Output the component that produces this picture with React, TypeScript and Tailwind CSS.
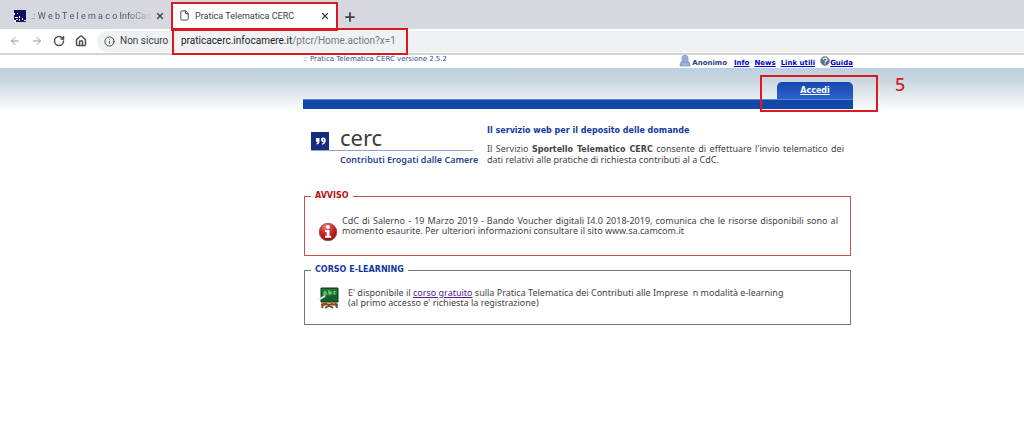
import type { ReactNode } from 'react';
import { ArrowLeft, ArrowRight, File, House, Info, Plus, RotateCw, X } from 'lucide-react';

interface NoticeProps {
    title: string;
    tone: 'alert' | 'course';
    icon: ReactNode;
    children: ReactNode;
}

const links = ['Info', 'News', 'Link utili'];

function TabIcon() {
    return (
        <svg viewBox="0 0 12 12" className="size-3 shrink-0">
            <rect width="12" height="12" fill="#10106a" />
            <path d="M1 1h2v2H1zM4 2h2v1H4zM2 5h3v1H2zM7 1h1v4H7z" fill="#080820" />
            <path d="M0 3h1v2H0zM3 3h1v1H3zM1 7h3v1H1zM5 6h1v2H5zM8 8h1v2H8zM10 10h2v1h-2zM0 10h2v2H0z" fill="#fff" />
            <path d="M2 9h2v1H2zM5 9h1v2H5z" fill="#e8dc60" />
        </svg>
    );
}

function UserIcon() {
    return (
        <svg viewBox="0 0 12 12" className="-mt-1 mr-px size-3">
            <path d="M1 11c0-3 1-5 3-5h4c2 0 3 2 3 5z" fill="#86a9cf" stroke="#7b9cc4" strokeWidth=".7" />
            <path d="M3 3c0-4 6-4 6 0v2c0 3-6 3-6 0z" fill="#93b0d0" stroke="#7c99bc" strokeWidth=".7" />
            <path d="M3 9h6" stroke="#b4cbe4" />
        </svg>
    );
}

function HelpIcon() {
    return (
        <svg viewBox="0 0 10 10" className="-mt-1 size-[10px]">
            <circle cx="5" cy="5" r="4.5" fill="#58708a" stroke="#8d9dac" strokeWidth=".8" />
            <path d="M3.2 3.8C3.2 1.6 7 1.7 7 3.7 7 5 5 5 5 6.3M5 7.2v1" fill="none" stroke="#fff" strokeWidth="1.2" />
        </svg>
    );
}

function InfoBall() {
    return (
        <svg viewBox="0 0 20 20" className="size-5">
            <defs>
                <radialGradient id="ball" cx=".4" cy=".2" r=".8">
                    <stop offset="0" stopColor="#ef8580" />
                    <stop offset=".45" stopColor="#ce3030" />
                    <stop offset="1" stopColor="#8e1010" />
                </radialGradient>
            </defs>
            <circle cx="10" cy="10" r="8.8" fill="url(#ball)" stroke="#9b4a4a" strokeWidth=".8" />
            <circle cx="10" cy="5" r="1.9" fill="#fff" />
            <path d="M7 8h4.500v5.800h1.700v2H7v-2h1.600V10H7z" fill="#fff" />
        </svg>
    );
}

function Blackboard() {
    return (
        <svg viewBox="0 0 22 22" className="size-[22px]">
            <path d="M6 15l-2 6M17 15l2 6M3 17.500h17M7 21l8-5M15 21l-8-5" stroke="#7d4c24" strokeWidth="2" />
            <path d="M3 1h17v14H3z" fill="#14602a" stroke="#0b3d1b" />
            <path d="M4 2h15v5L4 11z" fill="#1d7a35" />
            <path d="M6 5h2v3H6zM11 3v4h2V5h-2M17.500 4.500H16v2.500h1.500" fill="none" stroke="#a8d9a8" strokeWidth=".9" />
            <path d="M0 13l7-4" stroke="#e6eee2" strokeWidth="1.800" />
            <path d="M3 15.500h17" stroke="#b5793b" />
        </svg>
    );
}

function CercLogo() {
    return (
        <div className="grid grid-cols-[18px_minmax(0,1fr)] gap-x-[11px]">
            <svg viewBox="0 0 18 18" className="mt-[7px] size-[18px]">
                <rect width="18" height="18" fill="#182c7c" />
                <path d="M5 6h3.500v3.500c0 2-1.500 3-3 3v-1.200c.8-.2 1-.8 1-1.500H5z" fill="#fff" />
                <path d="M10 7.800c0-3 4.800-3 4.800.4 0 2.500-1.500 4-3.800 4.600v-1.300c1-.3 1.600-.9 1.700-1.700-1.700.5-2.700-.6-2.700-2z" fill="#fff" />
                <path d="M12 7.200h1v1.300h-1z" fill="#182c7c" />
            </svg>
            <div className="h-[25px] font-['Noto_Sans',sans-serif] text-[22px] leading-6 text-[#3c3c3c]">cerc</div>
            <div className="col-span-2 h-px bg-[#8ea4cd]" />
            <div className="col-start-2 mt-px whitespace-nowrap font-['Noto_Sans',sans-serif] text-[9px] leading-4 font-semibold text-[#28458e]">
                Contributi Erogati dalle Camere
            </div>
        </div>
    );
}

function Notice({ title, tone, icon, children }: NoticeProps) {
    const alert = tone === 'alert';

    return (
        <fieldset className={`mr-[2px] ml-px border px-[6px] ${alert ? 'border-[#c8504c] pb-[13px]' : 'border-[#777] pb-[15px]'}`}>
            <legend className={`px-1 font-['DejaVu_Sans',Verdana,sans-serif] text-[8px] leading-[10px] font-bold ${alert ? 'text-[#b50d12]' : 'text-[#1239a0]'}`}>
                {title}
            </legend>
            <div className={`flex gap-1 pr-[6px] pl-[7px] ${alert ? 'pt-[15px]' : 'pt-[12px]'}`}>
                <div className={`shrink-0 ${alert ? 'pt-[6px]' : ''}`}>{icon}</div>
                <div className={alert ? 'grow text-justify' : 'pt-px pl-1'}>{children}</div>
            </div>
        </fieldset>
    );
}

function BrowserBar() {
    return (
        <header className="font-[Roboto,sans-serif] text-[#3c4043]">
            <div className="flex h-[29px] items-end bg-[#d5d8df]">
                <div className="flex h-[25px] w-[171px] items-center pr-[6px] pb-px pl-[14px]">
                    <TabIcon />
                    <span className="ml-[5px] w-[121px] bg-linear-to-r from-[#4b4e54] from-80% to-transparent bg-clip-text text-[9px] whitespace-nowrap text-transparent">
                        .: W e b T e l e m a c o InfoCam
                    </span>
                    <button type="button" aria-label="Chiudi scheda" className="ml-[3px]"><X size={10} strokeWidth={3} /></button>
                </div>
                <div className="relative flex h-[27px] w-[167px] items-center bg-white pr-2 pl-2">
                    <File size={11} />
                    <span className="ml-[5px] grow text-[9px]">Pratica Telematica CERC</span>
                    <button type="button" aria-label="Chiudi scheda"><X size={10} strokeWidth={3} /></button>
                    <div className="absolute inset-x-0 top-0 -bottom-[2px] border-2 border-[#dc1820]" />
                </div>
                <button type="button" aria-label="Nuova scheda" className="mb-[5px] ml-[5px]"><Plus size={14} strokeWidth={3} /></button>
            </div>
            <div className="flex h-[24px] items-center bg-white pl-[9px]">
                <nav className="flex w-[88px] gap-[10px] text-[#4d5156]">
                    <button type="button" aria-label="Indietro" className="text-[#999]"><ArrowLeft size={12} /></button>
                    <button type="button" aria-label="Avanti" className="text-[#999]"><ArrowRight size={12} /></button>
                    <button type="button" aria-label="Ricarica"><RotateCw size={12} strokeWidth={3} /></button>
                    <button type="button" aria-label="Home">
                        <House size={12} strokeWidth={3}><path d="M9 21h6" stroke="none" /></House>
                    </button>
                </nav>
                <div className="flex h-[21px] grow items-center rounded-l-full bg-[#f0f1f3] pl-[7px] text-[10px]">
                    <Info size={11} />
                    <span className="ml-[5px] w-[52px] whitespace-nowrap">Non sicuro</span>
                    <div className="relative flex h-[27px] w-[236px] shrink-0 items-center border-2 border-[#dc1820] pl-[7px] whitespace-nowrap">
                        <span className="text-[#202124]">praticacerc.infocamere.it</span>
                        <span className="text-[#74787c]">/ptcr/Home.action?x=1</span>
                    </div>
                </div>
            </div>
            <div className="h-[2px] bg-[#d4d4d4]" />
        </header>
    );
}

export default function App() {
    return (
        <div className="min-h-screen bg-white font-['Noto_Sans',Verdana,sans-serif] text-[9px] leading-[10px] text-[#444]">
            <BrowserBar />
            <div className="bg-linear-to-b from-[#bcd0e4] via-[#c8d5de] via-25% to-white bg-[length:100%_44px] bg-[position:0_13px] bg-no-repeat pl-[132px]">
                <div className="mx-auto w-full max-w-[550px]">
                    <div className="flex h-[13px] justify-between bg-white font-['DejaVu_Sans',Verdana,sans-serif] text-[7px]">
                        <span className="-mt-px text-[#35499a]">:: Pratica Telematica CERC versione 2.5.2</span>
                        <div className="flex items-center gap-[7px] pt-[2px] font-bold text-[#0000c8]">
                            <span className="flex items-center text-[#263f86]"><UserIcon />Anonimo</span>
                            <div className="flex gap-[5px]">
                                {links.map((link) => (
                                    <a key={link} href="#" className="underline">{link}</a>
                                ))}
                                <a href="#" className="flex items-center underline"><HelpIcon />Guida</a>
                            </div>
                        </div>
                    </div>
                    <div className="flex h-[31px] items-end justify-end">
                        <div className="relative">
                            <a href="#" className="block h-[17px] w-[76px] rounded-t-[5px] bg-linear-to-b from-[#1747ae] to-[#2a62d0] text-center font-['DejaVu_Sans',Verdana,sans-serif] text-[8px] leading-[17px] font-bold text-white underline">
                                Accedi
                            </a>
                            <div className="absolute -top-[7px] -left-[17px] h-[37px] w-[118px] border-2 border-[#dc1820]" />
                            <span className="absolute -top-[7px] left-[118px] text-[18px] leading-[18px] font-medium text-[#dc1820]">5</span>
                        </div>
                    </div>
                    <div className="h-[10px] border-t border-[#5685c8] bg-[#1246a8]" />

                    <main>
                        <section className="flex pt-[16px] pl-2">
                            <div className="w-[162px] shrink-0"><CercLogo /></div>
                            <div className="ml-[14px] w-[357px] pt-px">
                                <h1 className="font-['DejaVu_Sans',Verdana,sans-serif] text-[8px] font-bold text-[#1239a0]">Il servizio web per il deposito delle domande</h1>
                                <p className="mt-2 text-justify">
                                    Il Servizio <b className="font-['DejaVu_Sans',Verdana,sans-serif] text-[8px]">Sportello Telematico CERC</b> consente di effettuare l'invio telematico dei dati relativi alle pratiche di richiesta contributi al a CdC.
                                </p>
                            </div>
                        </section>
                        <div className="mt-[23px] flex flex-col gap-[9px]">
                            <Notice title="AVVISO" tone="alert" icon={<InfoBall />}>
                                CdC di Salerno - 19 Marzo 2019 - Bando Voucher digitali I4.0 2018-2019, comunica che le risorse disponibili sono al momento esaurite. Per ulteriori informazioni consultare il sito www.sa.camcom.it
                            </Notice>
                            <Notice title="CORSO E-LEARNING" tone="course" icon={<Blackboard />}>
                                E' disponibile il <a href="#" className="text-[#551a8b] underline">corso gratuito</a> sulla Pratica Telematica dei Contributi alle Imprese&nbsp; n modalità e-learning
                                <br />
                                (al primo accesso e' richiesta la registrazione)
                            </Notice>
                        </div>
                    </main>
                </div>
            </div>
        </div>
    );
}
